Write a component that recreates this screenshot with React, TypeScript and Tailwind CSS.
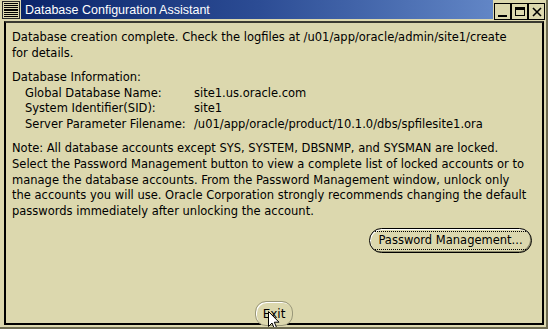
const BODY = "font-['DejaVu_Sans',sans-serif] text-[11.5px] text-black";

function MenuIcon() {
  return (
    <div className="w-[18px] h-[18px] border border-[#2a2a2a] bg-[#dcd8ae] flex flex-col justify-between px-[1px] py-[1px]">
      {[0, 1, 2, 3, 4, 5, 6, 7].map((i) => (
        <div key={i} className="h-[1px] bg-black" />
      ))}
    </div>
  );
}

function WinButton({ children }: { children: React.ReactNode }) {
  return (
    <div className="w-[17px] h-[17px] border border-black bg-[#dcd8ae] flex items-center justify-center">
      {children}
    </div>
  );
}

function Cursor() {
  return (
    <svg
      className="absolute left-[268px] top-[311px]"
      width="13"
      height="20"
      viewBox="0 0 13 20"
    >
      <path
        d="M0.5 0.5 L0.5 15.5 L4 12 L6.5 18 L8.8 17 L6.3 11.2 L11 11.2 Z"
        fill="#fff"
        stroke="#000"
        strokeWidth="1"
      />
    </svg>
  );
}

export default function App() {
  return (
    <div className="relative w-[548px] h-[329px] overflow-hidden bg-[#dcd8ae] border-r-2 border-b-2 border-[#6e6c52] flex flex-col">
      {/* title bar */}
      <div className="flex h-[21px] pl-[2px] pt-[1px]">
        <MenuIcon />
        <div className="ml-[1px] h-[19px] -mt-[1px] w-[472px] bg-gradient-to-r from-[#0a246a] via-[#2c4c94] to-[#6286c6] pl-[4px] leading-[20px] text-white text-[12.5px] font-['Liberation_Sans',sans-serif]">
          Database Configuration Assistant
        </div>
        <div className="flex ml-[1px] mt-[2px]">
          <WinButton>
            <div className="w-[9px] h-[2px] bg-black mt-[8px]" />
          </WinButton>
          <WinButton>
            <div className="w-[10px] h-[9px] border border-black border-t-[3px]" />
          </WinButton>
          <WinButton>
            <svg width="10" height="10" viewBox="0 0 10 10">
              <path d="M1 1 L9 9 M9 1 L1 9" stroke="#000" strokeWidth="1.6" />
            </svg>
          </WinButton>
        </div>
      </div>

      {/* content panel */}
      <div className={`flex-1 ml-[4px] mr-[2px] mb-[2px] border-2 border-black border-t-[#3a3a30] flex flex-col px-[6px] pt-[7px] ${BODY}`}>
        <div className="leading-[15.5px] whitespace-nowrap">
          <div>Database creation complete. Check the logfiles at /u01/app/oracle/admin/site1/create</div>
          <div>for details.</div>
        </div>

        <div className="mt-[9px] leading-[15.5px] whitespace-nowrap">
          <div>Database Information:</div>
          <div className="grid grid-cols-[169px_1fr] pl-[13px]">
            <span>Global Database Name:</span>
            <span>site1.us.oracle.com</span>
            <span>System Identifier(SID):</span>
            <span>site1</span>
            <span>Server Parameter Filename:</span>
            <span>/u01/app/oracle/product/10.1.0/dbs/spfilesite1.ora</span>
          </div>
        </div>

        <div className="mt-[9px] leading-[15.8px] whitespace-nowrap">
          <div>Note: All database accounts except SYS, SYSTEM, DBSNMP, and SYSMAN are locked.</div>
          <div>Select the Password Management button to view a complete list of locked accounts or to</div>
          <div>manage the database accounts. From the Password Management window, unlock only</div>
          <div>the accounts you will use. Oracle Corporation strongly recommends changing the default</div>
          <div>passwords immediately after unlocking the account.</div>
        </div>

        <div className="flex justify-end mt-[8px] pr-[4px]">
          <button className="h-[25px] w-[163px] rounded-full border border-black bg-[#dcd8ae] shadow-[inset_1px_1px_0_#ffffff,inset_-1px_-1px_0_#8c8a6c] flex items-center justify-center">
            <span className="border-y border-dotted border-black leading-[17px] px-[3px]">
              Password Management...
            </span>
          </button>
        </div>

        <div className="flex-1" />

        <div className="flex justify-center -mb-[3px]">
          <button className="relative h-[25px] w-[38px] rounded-[11px] border border-[#9a987a] bg-[#dcd8ae] shadow-[inset_1px_1px_0_#ffffff] text-[12px]">
            Exit
          </button>
        </div>
      </div>

      <Cursor />
    </div>
  );
}
